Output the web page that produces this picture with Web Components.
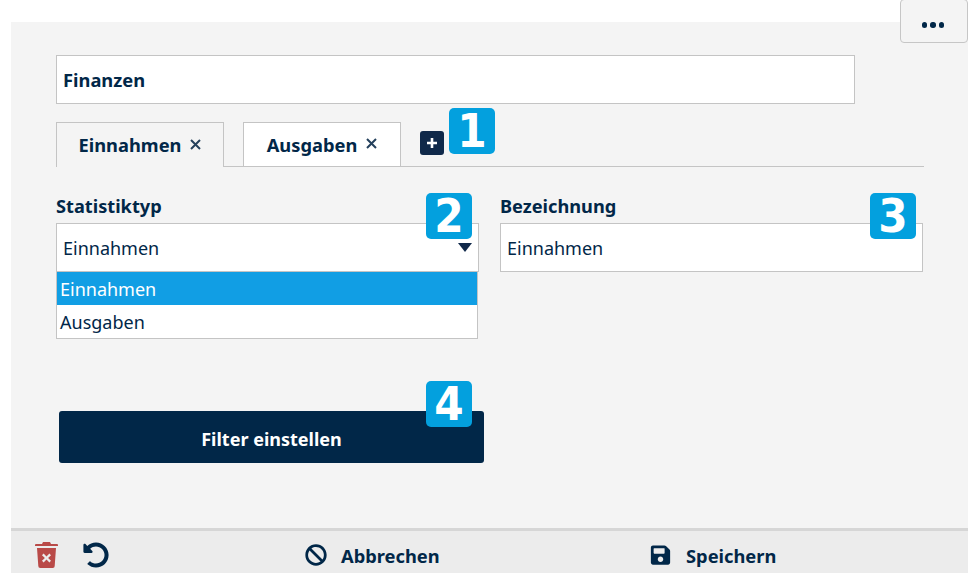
<!DOCTYPE html>
<html lang="de">
<head>
<meta charset="utf-8">
<title>Statistik</title>
<style>
  html, body { margin: 0; padding: 0; background: #fff; }
  body { width: 972px; height: 573px; overflow: hidden; font-family: "Noto Sans", "Open Sans", sans-serif; color: #012748; }
</style>
</head>
<body>
<stat-panel>
  <more-button slot="more"></more-button>
  <text-box strong>Finanzen</text-box>
  <tab-bar>
    <tab-item active>Einnahmen</tab-item>
    <tab-item>Ausgaben</tab-item>
    <add-button></add-button>
    <num-badge style="left:393px;top:-14px">1</num-badge>
  </tab-bar>
  <form-grid>
    <form-field label="Statistiktyp">
      <select-box value="Einnahmen">
        <select-option selected>Einnahmen</select-option>
        <select-option>Ausgaben</select-option>
      </select-box>
      <num-badge slot="badge" style="left:370px;top:-2px">2</num-badge>
    </form-field>
    <form-field label="Bezeichnung">
      <text-box>Einnahmen</text-box>
      <num-badge slot="badge" style="left:370px;top:-2px">3</num-badge>
    </form-field>
  </form-grid>
  <primary-button>
    Filter einstellen
    <num-badge slot="badge" style="left:367px;top:-30px">4</num-badge>
  </primary-button>
  <action-bar slot="footer"></action-bar>
</stat-panel>

<script>
"use strict";

function makeEl(tag, css, html) {
  class El extends HTMLElement {
    constructor() {
      super();
      const shadow = this.attachShadow({ mode: "open" });
      const template = document.createElement("template");
      template.innerHTML = "<style>" + css + "</style>" + (typeof html === "function" ? html(this) : html);
      shadow.appendChild(template.content.cloneNode(true));
    }
  }
  customElements.define(tag, El);
}

makeEl("stat-panel", `
  :host { display: flex; flex-direction: column; position: relative; width: 957px; height: 551px; margin: 22px 0 0 11px; background: #f4f4f4; }
  .body { flex: 1; padding: 33px 44px 0 45px; display: flex; flex-direction: column; }
`, `<slot name="more"></slot><div class="body"><slot></slot></div><slot name="footer"></slot>`);

makeEl("more-button", `
  :host { position: absolute; right: 0; top: -23px; width: 68px; height: 44px; display: flex; align-items: center; justify-content: center; gap: 3px; padding: 8px 2px 0 0; box-sizing: border-box; background: #f4f4f4; border: 1px solid #c6c6c6; border-radius: 4px; }
  i { width: 5.4px; height: 5.4px; border-radius: 50%; background: #012748; }
`, `<i></i><i></i><i></i>`);

makeEl("text-box", `
  :host { display: block; box-sizing: border-box; height: 49px; background: #fff; border: 1px solid #c4c4c4; padding: 0 6px; font-size: 18px; line-height: 49px; color: #012748; }
  :host([strong]) { width: 799px; font-size: 18.3px; font-weight: 700; line-height: 47px; }
`, `<slot></slot>`);

makeEl("tab-bar", `
  :host { display: flex; align-items: flex-start; position: relative; margin-top: 18px; height: 45px; box-sizing: border-box; border-bottom: 1px solid #c4c4c4; }
`, `<slot></slot>`);

makeEl("tab-item", `
  :host { display: flex; align-items: center; justify-content: center; gap: 9px; box-sizing: border-box; height: 45px; padding-bottom: 1px; width: 158px; margin-right: 19px; background: #fff; border: 1px solid #c4c4c4; font-size: 18.3px; font-weight: 700; color: #012748; }
  :host([active]) { width: 168px; background: #f4f4f4; border-bottom: 0; }
  svg { width: 11px; height: 11px; margin-top: -1px; }
`, `<slot></slot><svg viewBox="0 0 11 11"><path d="M1 1l9 9M10 1l-9 9" stroke="#24405c" stroke-width="2" fill="none"/></svg>`);

makeEl("add-button", `
  :host { display: flex; align-items: center; justify-content: center; width: 24px; height: 24px; margin-top: 9px; background: #10294a; border-radius: 3px; }
  svg { width: 12px; height: 12px; }
`, `<svg viewBox="0 0 12 12"><path d="M6 1v10M1 6h10" stroke="#fff" stroke-width="2.6" fill="none"/></svg>`);

makeEl("num-badge", `
  :host { position: absolute; width: 46px; height: 46px; display: flex; align-items: center; justify-content: center; background: #03a0de; border-radius: 5px; color: #fff; font-family: "DejaVu Sans", sans-serif; font-stretch: condensed; font-size: 47px; font-weight: 700; line-height: 46px; }
`, `<slot></slot>`);

makeEl("form-grid", `
  :host { display: grid; grid-template-columns: 423px 423px; column-gap: 21px; margin-top: 28px; }
`, `<slot></slot>`);

makeEl("form-field", `
  :host { display: block; position: relative; }
  label { display: block; height: 28px; font-size: 18.2px; font-weight: 700; line-height: 22px; color: #012748; }
  .wrap { position: relative; }
`, el => `<label>${el.getAttribute("label")}</label><div class="wrap"><slot></slot></div><slot name="badge"></slot>`);

makeEl("select-box", `
  :host { display: block; position: relative; box-sizing: border-box; height: 49px; background: #fff; border: 1px solid #c4c4c4; padding: 0 6px; font-size: 18px; line-height: 49px; color: #012748; }
  .arrow { position: absolute; right: 6px; top: 19px; width: 0; height: 0; border-left: 7.5px solid transparent; border-right: 7.5px solid transparent; border-top: 9px solid #10294a; }
  .menu { position: absolute; left: -1px; top: 48px; width: 422px; box-sizing: border-box; background: #fff; border: 1px solid #c4c4c4; border-top: 0; }
`, el => `${el.getAttribute("value")}<span class="arrow"></span><div class="menu"><slot></slot></div>`);

makeEl("select-option", `
  :host { display: block; height: 33px; padding: 0 3px; font-size: 18px; line-height: 34px; color: #012748; }
  :host([selected]) { background: #119ee4; color: #fff; }
`, `<slot></slot>`);

makeEl("primary-button", `
  :host { display: flex; align-items: center; justify-content: center; position: relative; box-sizing: border-box; width: 425px; height: 52px; margin: 139px 0 0 3px; background: #012748; border-radius: 3px; color: #fff; font-size: 18px; font-weight: 700; padding-top: 4px; }
`, `<slot></slot><slot name="badge"></slot>`);

makeEl("action-bar", `
  :host { display: flex; align-items: center; box-sizing: border-box; height: 45px; padding: 5px 0 0 24px; background: #ececec; border-top: 3px solid #d6d6d6; font-size: 18.3px; font-weight: 700; color: #012748; }
  .left { display: flex; align-items: center; gap: 25px; width: 270px; }
  .act { display: flex; align-items: center; gap: 14px; }
  .act span { padding-top: 2px; }
  .cancel { width: 345px; }
  .trash { width: 23px; height: 27px; }
  .undo { width: 26px; height: 26px; }
  .ban { width: 22px; height: 22px; }
  .save { width: 21px; height: 22px; }
  .save-act { gap: 15px; }
  path { fill: #012748; }
  .trash path { fill: #b94a48; }
`, `
  <div class="left">
    <svg class="trash" viewBox="0 0 23 27"><path d="M8 1h7l1 2h6a1 1 0 0 1 1 1v1H0V4a1 1 0 0 1 1-1h6zM2 7h19l-1.3 18a2 2 0 0 1-2 2H5.3a2 2 0 0 1-2-2zM8.6 12.6l-1.6 1.6 2.9 2.8-2.9 2.8 1.6 1.6 2.9-2.8 2.9 2.8 1.6-1.6-2.9-2.8 2.9-2.8-1.6-1.6-2.9 2.8z" fill-rule="evenodd"/></svg>
    <svg class="undo" viewBox="0 0 512 512"><path d="M255.545 8c-66.269.119-126.438 26.233-170.86 68.685L48.971 40.971C33.851 25.851 8 36.559 8 57.941V192c0 13.255 10.745 24 24 24h134.059c21.382 0 32.09-25.851 16.971-40.971l-41.75-41.75c30.864-28.899 70.801-44.907 113.23-45.273 92.398-.798 170.283 73.977 169.484 169.442C423.236 348.009 349.816 424 256 424c-41.127 0-79.997-14.678-110.63-41.556-4.743-4.161-11.906-3.908-16.368.553L89.34 422.659c-4.872 4.872-4.631 12.815.482 17.433C133.798 479.813 192.074 504 256 504c136.966 0 247.999-111.033 248-247.998C504.001 119.193 392.354 7.755 255.545 8z"/></svg>
  </div>
  <div class="act cancel">
    <svg class="ban" viewBox="0 0 512 512"><path d="M256 8C119.034 8 8 119.033 8 256s111.034 248 248 248 248-111.034 248-248S392.967 8 256 8zm130.108 117.892c65.448 65.448 70 165.481 20.677 235.637L150.47 105.216c70.204-49.356 170.226-44.735 235.638 20.676zM125.892 386.108c-65.448-65.448-70-165.481-20.677-235.637L361.53 406.784c-70.203 49.356-170.226 44.736-235.638-20.676z"/></svg>
    <span>Abbrechen</span>
  </div>
  <div class="act save-act">
    <svg class="save" viewBox="0 0 448 512"><path d="M433.941 129.941l-83.882-83.882A48 48 0 0 0 316.118 32H48C21.49 32 0 53.49 0 80v352c0 26.51 21.49 48 48 48h352c26.51 0 48-21.49 48-48V163.882a48 48 0 0 0-14.059-33.941zM224 416c-35.346 0-64-28.654-64-64 0-35.346 28.654-64 64-64s64 28.654 64 64c0 35.346-28.654 64-64 64zm96-304.52V212c0 6.627-5.373 12-12 12H76c-6.627 0-12-5.373-12-12V108c0-6.627 5.373-12 12-12h228.52c3.183 0 6.235 1.264 8.485 3.515l3.48 3.48A11.996 11.996 0 0 1 320 111.48z"/></svg>
    <span>Speichern</span>
  </div>
`);
</script>
</body>
</html>
